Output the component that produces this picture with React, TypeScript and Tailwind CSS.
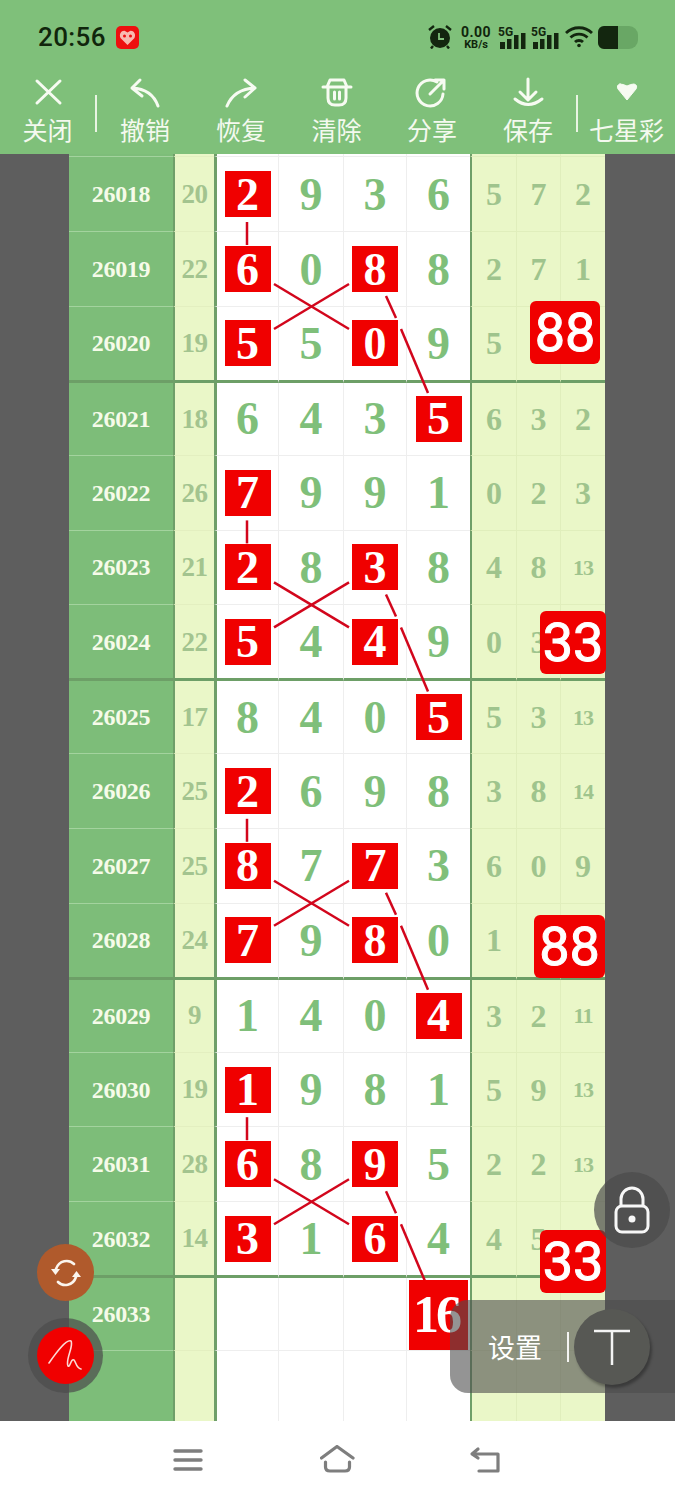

type Row = { id: string; sum: string; nums: (number | string)[]; red: number[]; right: string[]; end?: boolean; h: string };

const A = "h-[74.6px]";
const B = "h-[76px]";
const C = "h-[73.2px]";

const rows: Row[] = [
  { id: "", sum: "", nums: ["", "", "", ""], red: [], right: ["", "", ""], h: "h-[3px]" },
  { id: "26018", sum: "20", nums: [2, 9, 3, 6], red: [0], right: ["5", "7", "2"], h: "h-[75.3px]" },
  { id: "26019", sum: "22", nums: [6, 0, 8, 8], red: [0, 2], right: ["2", "7", "1"], h: A },
  { id: "26020", sum: "19", nums: [5, 5, 0, 9], red: [0, 2], right: ["5", "", ""], end: true, h: B },
  { id: "26021", sum: "18", nums: [6, 4, 3, 5], red: [3], right: ["6", "3", "2"], h: C },
  { id: "26022", sum: "26", nums: [7, 9, 9, 1], red: [0], right: ["0", "2", "3"], h: A },
  { id: "26023", sum: "21", nums: [2, 8, 3, 8], red: [0, 2], right: ["4", "8", "13"], h: A },
  { id: "26024", sum: "22", nums: [5, 4, 4, 9], red: [0, 2], right: ["0", "3", ""], end: true, h: B },
  { id: "26025", sum: "17", nums: [8, 4, 0, 5], red: [3], right: ["5", "3", "13"], h: C },
  { id: "26026", sum: "25", nums: [2, 6, 9, 8], red: [0], right: ["3", "8", "14"], h: A },
  { id: "26027", sum: "25", nums: [8, 7, 7, 3], red: [0, 2], right: ["6", "0", "9"], h: A },
  { id: "26028", sum: "24", nums: [7, 9, 8, 0], red: [0, 2], right: ["1", "", ""], end: true, h: B },
  { id: "26029", sum: "9", nums: [1, 4, 0, 4], red: [3], right: ["3", "2", "11"], h: C },
  { id: "26030", sum: "19", nums: [1, 9, 8, 1], red: [0], right: ["5", "9", "13"], h: A },
  { id: "26031", sum: "28", nums: [6, 8, 9, 5], red: [0, 2], right: ["2", "2", "13"], h: A },
  { id: "26032", sum: "14", nums: [3, 1, 6, 4], red: [0, 2], right: ["4", "5", ""], end: true, h: B },
  { id: "26033", sum: "", nums: ["", "", "", ""], red: [], right: ["", "", ""], h: C },
  { id: "", sum: "", nums: ["", "", "", ""], red: [], right: ["", "", ""], h: A },
];

const serif = "[font-family:'Liberation_Serif',serif] font-bold";
const cjk = "[font-family:'Noto_Sans_CJK_SC','Noto_Sans',sans-serif]";
const sticker = "absolute h-[63px] rounded-[6px] bg-[#f00000] text-white text-[54px] font-normal [-webkit-text-stroke:1px_white] leading-[64px] text-center [font-family:'Roboto',sans-serif]";

function TableRow({ row }: { row: Row }) {
  const bottom = row.end ? "border-b-[3px] border-b-[#6d9f67]" : "border-b";
  return (
    <div className={`flex shrink-0 ${row.h} ${serif}`}>
      <div className={`w-[104px] shrink-0 flex items-center justify-center bg-[#7dbd79] text-[#f6fbe9] text-[24px] tracking-[-0.3px] ${bottom} ${row.end ? "" : "border-b-[#a3d39e]"}`}>
        {row.id}
      </div>
      <div className={`w-[41px] shrink-0 flex items-center justify-center bg-[#eaf7c8] border-l-2 border-l-[#6f9f69] text-[#a3c48f] text-[27px] tracking-[-0.5px] ${bottom} ${row.end ? "" : "border-b-[#e3efc0]"}`}>
        {row.sum}
      </div>
      {row.nums.map((n, i) => (
        <div
          key={i}
          className={`shrink-0 flex items-center justify-center bg-white text-[#7fbf7a] text-[46px] ${bottom} ${row.end ? "" : "border-b-[#eeeeee]"} ${
            i === 0
              ? "w-[65px] border-l-[3px] border-l-[#6f9f69] border-r border-r-[#eeeeee]"
              : i === 1
                ? "w-[65px] border-r border-r-[#eeeeee]"
                : i === 2
                  ? "w-[63px] border-r border-r-[#eeeeee]"
                  : "w-[63px]"
          }`}
        >
          {row.red.includes(i) ? (
            <span className="w-[46px] h-[46px] bg-[#f00000] text-white flex items-center justify-center">{n}</span>
          ) : (
            n
          )}
        </div>
      ))}
      {row.right.map((n, i) => (
        <div
          key={i}
          className={`shrink-0 flex items-center justify-center bg-[#eaf7c8] text-[#9fc48d] ${n.length > 1 ? "text-[22px] tracking-[-1px]" : "text-[32px]"} ${bottom} ${row.end ? "" : "border-b-[#e0eebc]"} ${
            i === 0 ? "w-[47px] border-l-2 border-l-[#6f9f69] border-r border-r-[#e0eebc]" : i === 1 ? "w-[44px] border-r border-r-[#e0eebc]" : "w-[44px]"
          }`}
        >
          {n}
        </div>
      ))}
    </div>
  );
}

function ToolItem({ label, w, children }: { label: string; w: string; children: React.ReactNode }) {
  return (
    <div className={`${w} shrink-0 flex flex-col items-center`}>
      <svg width="40" height="40" viewBox="0 0 40 40" fill="none" stroke="#f7fbf2" strokeWidth="3" strokeLinecap="round" strokeLinejoin="round" className="mt-[-6px]">
        {children}
      </svg>
      <span className={`text-[25px] leading-[30px] mt-[2px] text-[#f4f9ef] whitespace-nowrap ${cjk}`}>{label}</span>
    </div>
  );
}

function Signal() {
  return (
    <div className="relative w-[26px] h-[21px] mt-[3px]">
      <span className="absolute left-[-2px] top-[-2px] text-[12px] leading-[12px] font-bold text-[#13260f] [font-family:'Roboto',sans-serif]">5G</span>
      <svg width="26" height="21" viewBox="0 0 26 21" className="absolute inset-0">
        <rect x="0" y="14" width="5" height="7" fill="#13260f" />
        <rect x="7" y="11" width="4.5" height="10" fill="#13260f" />
        <rect x="14" y="7" width="4.5" height="14" fill="#13260f" />
        <rect x="21" y="5" width="4.5" height="16" fill="#13260f" />
      </svg>
    </div>
  );
}

function seg(dy: number) {
  const p = [
    [247, 222, 247, 245],
    [274, 284, 349, 329],
    [274, 329, 349, 284],
    [386, 296, 396, 318],
    [401, 329, 428, 393],
  ];
  return p.map((l, i) => <line key={`${dy}-${i}`} x1={l[0]} y1={l[1] + dy} x2={l[2]} y2={l[3] + dy} />);
}

export default function App() {
  return (
    <div className="relative w-[675px] h-[1500px] overflow-hidden bg-white">
      {/* Status bar + toolbar */}
      <div className="h-[154px] bg-[#7fc07a] flex flex-col">
        <div className="h-[72px] flex items-center pl-[38px] pr-[37px] pt-[2px] text-[#10260c]">
          <span className="text-[26px] leading-none font-medium tracking-[0.4px] [font-family:'Roboto',sans-serif]">20:56</span>
          <svg width="23" height="23" viewBox="0 0 23 23" className="ml-[10px]">
            <rect width="23" height="23" rx="5" fill="#ee0f0f" />
            <path d="M11.5 19 L4.5 12 C2.5 8 6 4 9 5 L11.5 6.5 L14 5 C17 4 20.5 8 18.5 12 Z" fill="#f8b9b0" />
            <circle cx="8.5" cy="10" r="1.5" fill="#ee0f0f" />
            <circle cx="14.5" cy="10" r="1.5" fill="#ee0f0f" />
          </svg>
          <div className="ml-auto flex items-center">
            <svg width="24" height="24" viewBox="0 0 24 24" fill="#13260f">
              <circle cx="12" cy="13" r="10" />
              <path d="M1 5 L6 1 M23 5 L18 1 M5 21 L3 23.5 M19 21 L21 23.5" stroke="#13260f" strokeWidth="2.4" />
              <path d="M11 8 V14 H16" stroke="#7fc07a" strokeWidth="1.8" fill="none" />
            </svg>
            <div className="ml-[8px] w-[32px] flex flex-col items-center font-bold [font-family:'Roboto',sans-serif]">
              <span className="text-[14px] leading-[14px] tracking-[0.4px]">0.00</span>
              <span className="text-[11px] leading-[11px]">KB/s</span>
            </div>
            <div className="ml-[8px]"><Signal /></div>
            <div className="ml-[7px]"><Signal /></div>
            <svg width="28" height="22" viewBox="0 0 28 22" fill="none" stroke="#13260f" strokeWidth="2.8" className="ml-[6px]">
              <path d="M1 7 C8 0 20 0 27 7" />
              <path d="M5.5 11.5 C10 7 18 7 22.5 11.5" />
              <path d="M10 16 C12 14 16 14 18 16" />
              <circle cx="14" cy="19.5" r="1.8" fill="#13260f" stroke="none" />
            </svg>
            <div className="ml-[5px] w-[40px] h-[23px] rounded-l-[6px] rounded-r-[9px] bg-[#69a765] overflow-hidden">
              <div className="w-[20px] h-full bg-[#13260f]" />
            </div>
          </div>
        </div>
        <div className="flex items-start pt-[6px] h-[82px]">
          <ToolItem label="关闭" w="w-[95px]">
            <path d="M9 9 L32 31 M32 9 L9 31" />
          </ToolItem>
          <div className="w-[2px] h-[37px] mt-[17px] bg-[#e9f4e3] shrink-0" />
          <ToolItem label="撤销" w="w-[96px]">
            <path d="M15 8 L7 16 L17 24 M7 16 Q27 17 33 34" />
          </ToolItem>
          <ToolItem label="恢复" w="w-[96px]">
            <path d="M24 8 L34 16 L24 25 M34 16 Q13 17 6 34" />
          </ToolItem>
          <ToolItem label="清除" w="w-[95px]">
            <path d="M6 15 H34 M10 15 L13 8 H27 L30 15" />
            <path d="M11 15 V26 Q11 33 18 33 H22 Q29 33 29 26 V15" />
            <path d="M17.5 20 V27 M22.5 20 V27" />
          </ToolItem>
          <ToolItem label="分享" w="w-[96px]">
            <path d="M25 10 A13 13 0 1 0 31 22" />
            <path d="M18 22 L32 8 M23 8 H32 V17" />
          </ToolItem>
          <ToolItem label="保存" w="w-[96px]">
            <path d="M20 7 V27 M12 20 L20 28 L28 20 M7 27 Q20 38 34 27" />
          </ToolItem>
          <div className="w-[2px] h-[37px] mt-[17px] bg-[#e9f4e3] shrink-0" />
          <ToolItem label="七星彩" w="w-[97px]">
            <path d="M13 12 Q16 12 20 14 Q24 12 27 12 Q31 13 29 17 L20 28 L11 17 Q9 13 13 12 Z" fill="#f7fbf2" stroke="#f7fbf2" strokeWidth="1" />
          </ToolItem>
        </div>
      </div>

      {/* Chart */}
      <div className="h-[1267px] overflow-hidden bg-[#5e5e5e] pl-[69px]">
        <div className="w-[536px] h-full flex flex-col overflow-hidden">
          {rows.map((r, i) => (
            <TableRow key={i} row={r} />
          ))}
        </div>
      </div>

      {/* Bottom nav */}
      <div className="h-[79px] flex items-center relative">
        <svg width="30" height="24" viewBox="0 0 30 24" className="ml-[173px] mt-[-1px]" fill="none" stroke="#7e7e7e" strokeWidth="3.4" strokeLinecap="round">
          <path d="M2 3 H28 M2 12 H28 M2 21 H28" />
        </svg>
        <svg width="36" height="28" viewBox="0 0 36 28" className="ml-[117px] mt-[-3px]" fill="none" stroke="#7e7e7e" strokeWidth="3.2" strokeLinecap="round" strokeLinejoin="round">
          <path d="M1.5 13 L17 1.5 L33 13" />
          <path d="M5.5 17 V22 Q5.5 26 10 26 H25 Q29.5 26 29.5 22 V17" />
        </svg>
        <svg width="32" height="28" viewBox="0 0 32 28" className="ml-[113px] mt-[-1px]" fill="none" stroke="#7e7e7e" strokeWidth="3.2" strokeLinecap="round" strokeLinejoin="round">
          <path d="M4 8 H29 V25 H10 M9 3 L3 8 L9 12" />
        </svg>
      </div>

      {/* Connector lines */}
      <svg className="absolute inset-0 pointer-events-none" width="675" height="1500" viewBox="0 0 675 1500" stroke="#d2061c" strokeWidth="2.5">
        {seg(0)}
        {seg(298.4)}
        {seg(596.8)}
        {seg(895.2)}
      </svg>

      {/* Sticker labels */}
      <div className={`${sticker} left-[530px] top-[301px] w-[70px]`}>88</div>
      <div className={`${sticker} left-[540px] top-[611px] w-[66px]`}>33</div>
      <div className={`${sticker} left-[534px] top-[915px] w-[71px]`}>88</div>
      <div className={`${sticker} left-[540px] top-[1230px] w-[66px]`}>33</div>
      <div className={`absolute left-[409px] top-[1280px] w-[59px] h-[70px] bg-[#f00000] text-white text-[52px] leading-[70px] text-center tracking-[-3px] pr-[5px] ${serif}`}>16</div>

      {/* Floating controls */}
      <div className="absolute left-[450px] top-[1300px] w-[225px] h-[93px] rounded-l-[18px] bg-[#4c4c4c]/60 flex items-center pl-[38px] text-white">
        <span className={`text-[27px] leading-none ${cjk}`}>设置</span>
        <span className="ml-[25px] w-[2px] h-[30px] bg-white/90" />
      </div>
      <div className="absolute left-[574px] top-[1309px] w-[76px] h-[76px] rounded-full bg-[#575854] shadow-[2px_3px_3px_rgba(0,0,0,0.3)] flex items-center justify-center">
        <svg width="40" height="40" viewBox="0 0 40 40" fill="none" stroke="#f4f4f4" strokeWidth="2.5">
          <path d="M2 4 H38 M20 4 V38" />
        </svg>
      </div>
      <div className="absolute left-[594px] top-[1172px] w-[76px] h-[76px] rounded-full bg-[#4a4a4a]/70 flex items-center justify-center">
        <svg width="38" height="50" viewBox="0 0 38 50" fill="none" stroke="#f7f7f7" strokeWidth="3">
          <path d="M8 21 V14 A11 11 0 0 1 30 14 V21" />
          <rect x="3" y="21" width="32" height="26" rx="6" />
          <circle cx="19" cy="34" r="3.5" fill="#f7f7f7" stroke="none" />
        </svg>
      </div>
      <div className="absolute left-[37px] top-[1244px] w-[57px] h-[57px] rounded-full bg-[#b05a2c] flex items-center justify-center">
        <svg width="32" height="28" viewBox="0 0 32 28" fill="none" stroke="#fbf5ee" strokeWidth="2.6" strokeLinecap="round">
          <path d="M24 5 C19 0 9 1 6 10" />
          <path d="M8 23 C13 28 23 27 26 18" />
          <path d="M1 10 H10 L5.5 16 Z" fill="#fbf5ee" stroke="none" />
          <path d="M22 18 H31 L26.5 12 Z" fill="#fbf5ee" stroke="none" />
        </svg>
      </div>
      <div className="absolute left-[28px] top-[1318px] w-[75px] h-[75px] rounded-full bg-[#4c4c4c]/70 flex items-center justify-center">
        <div className="w-[57px] h-[57px] rounded-full bg-[#f00000] flex items-center justify-center">
          <svg width="36" height="36" viewBox="0 0 36 36" fill="none" stroke="#fcd9d5" strokeWidth="1.6" strokeLinecap="round" strokeLinejoin="round">
            <path d="M1 25 C8 15 18 1 23 3 C26 8 17 22 20 28 C22 30 23 20 26 22 C28 24 28 30 33 31" />
          </svg>
        </div>
      </div>
    </div>
  );
}
